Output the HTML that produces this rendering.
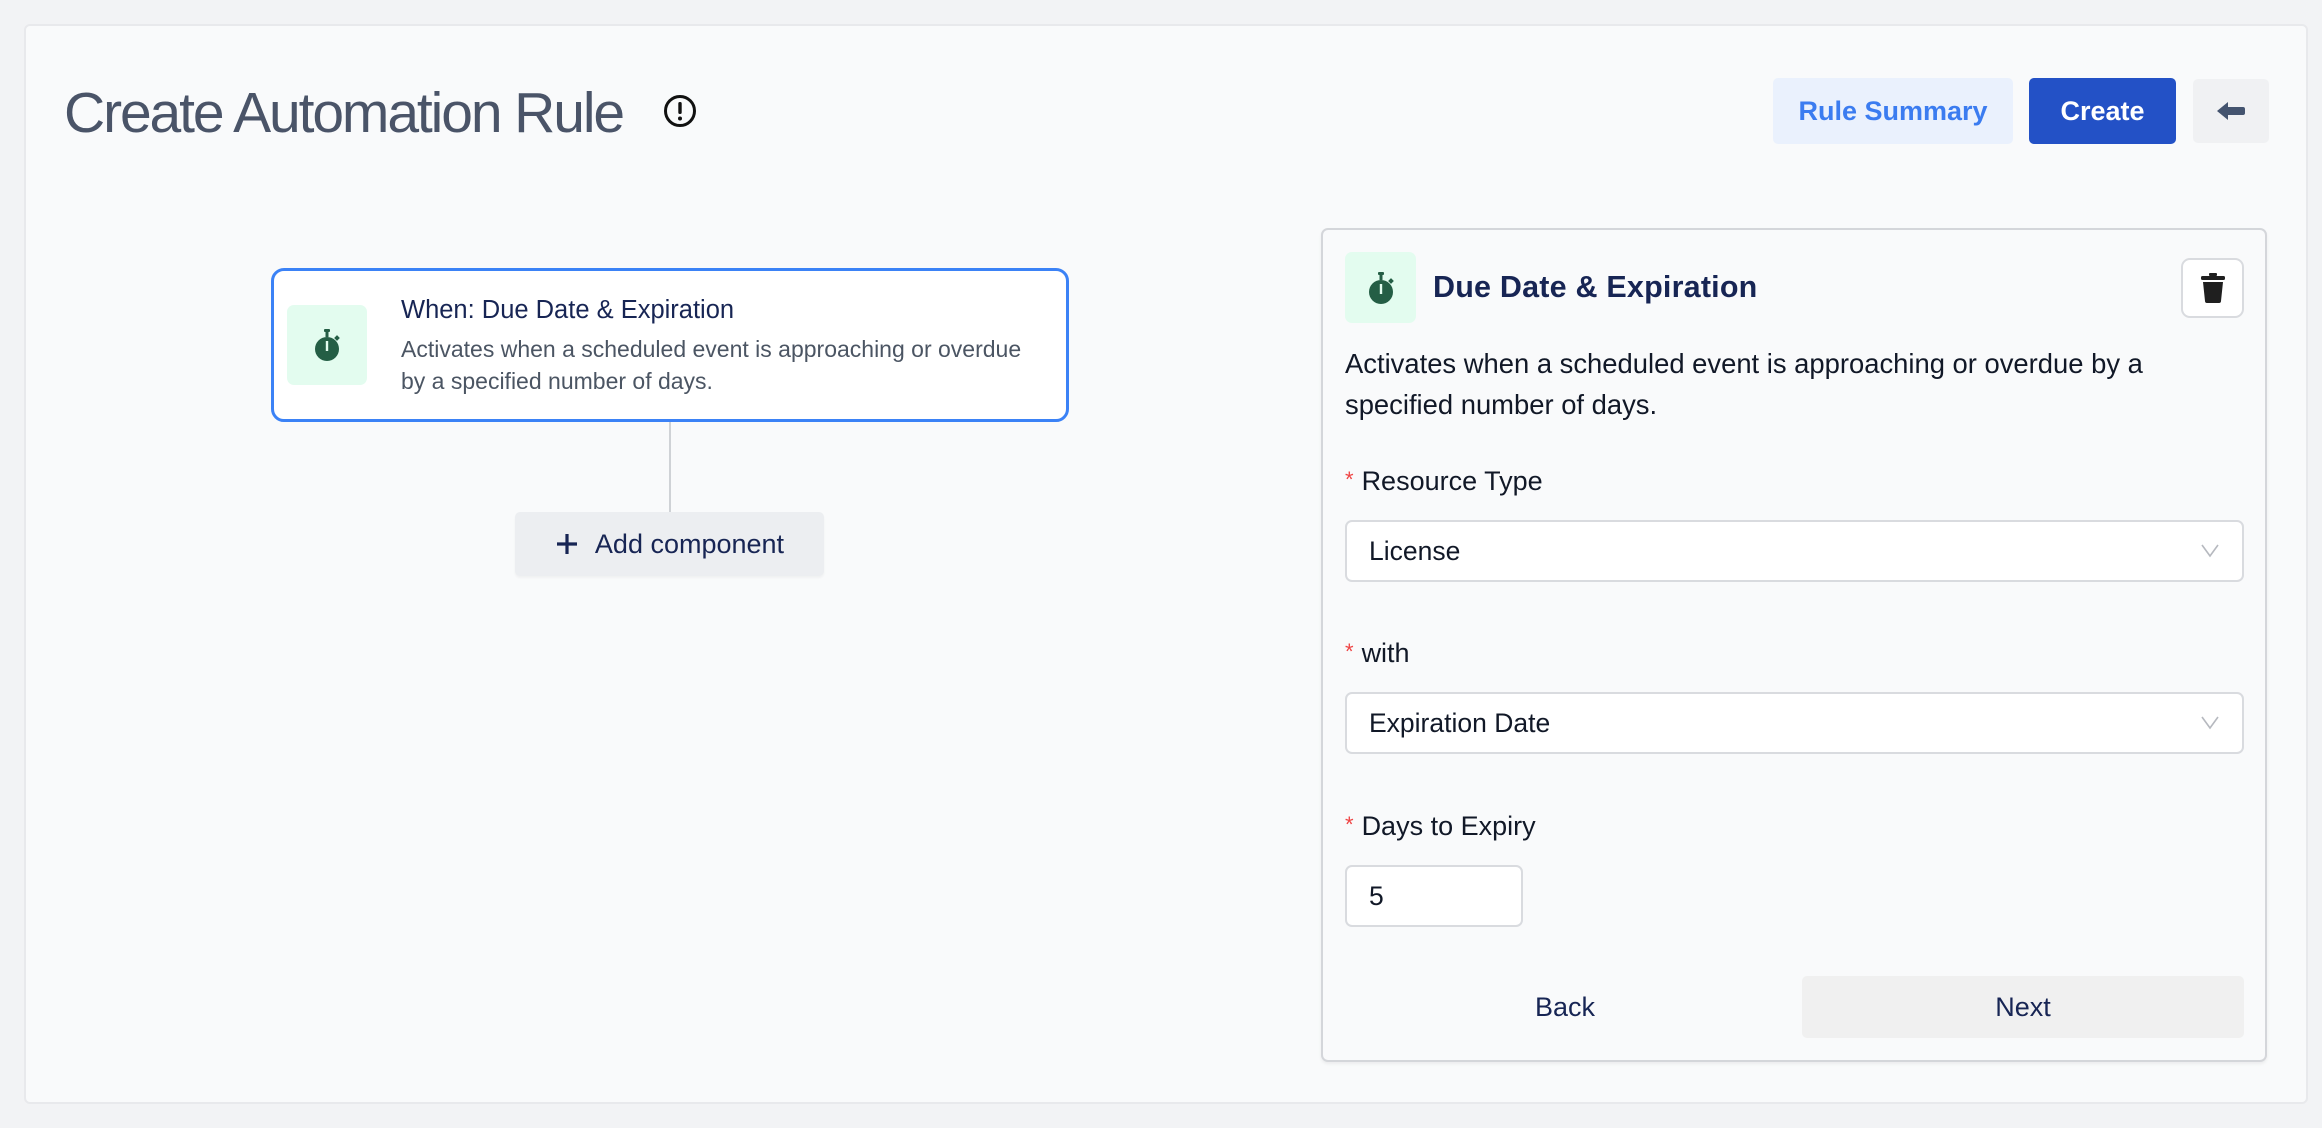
<!DOCTYPE html>
<html><head><meta charset="utf-8"><style>
*{box-sizing:border-box;margin:0;padding:0}
body{width:2322px;height:1128px;background:#f2f3f5;font-family:"Liberation Sans",Helvetica,Arial,sans-serif;position:relative;overflow:hidden}
.abs{position:absolute}
.card{left:24px;top:24px;width:2284px;height:1080px;background:#f9fafb;border:2px solid #e8e9ec;border-radius:6px}
.title{left:64px;top:80px;font-size:57px;font-weight:300;color:#4a5468;letter-spacing:-2.1px;line-height:66px}
.btn{display:flex;align-items:center;justify-content:center;border-radius:5px;font-size:27px}
.node{left:271px;top:268px;width:798px;height:154px;background:#fff;border:3px solid #3b82f6;border-radius:13px}
.icbox{background:#e3fcef;border-radius:7px;display:flex;align-items:center;justify-content:center}
.panel{left:1321px;top:228px;width:946px;height:834px;border:2px solid #d4d6da;border-radius:7px;background:#f9fafb;box-shadow:0 2px 3px rgba(0,0,0,.06)}
.lbl{font-size:27px;color:#111827;font-weight:500}
.lbl span{color:#ef4444;font-size:22px;margin-right:8px;position:relative;top:-3px}
.sel{background:#fff;border:2px solid #d9dbdf;border-radius:7px;font-size:26.5px;color:#111827;display:flex;align-items:center;padding-left:22px}
</style></head><body>
<div class="abs card"></div>
<div class="abs title">Create Automation Rule</div>
<svg class="abs" style="left:663px;top:94px" width="34" height="34" viewBox="0 0 34 34"><circle cx="17" cy="17" r="14.5" fill="none" stroke="#111" stroke-width="3"/><rect x="15.3" y="8" width="3.4" height="12" rx="1.5" fill="#111"/><circle cx="17" cy="24.5" r="2" fill="#111"/></svg>

<div class="abs btn" style="left:1773px;top:78px;width:240px;height:66px;background:#eaf1fd;color:#3b7cf0;font-weight:600">Rule Summary</div>
<div class="abs btn" style="left:2029px;top:78px;width:147px;height:66px;background:#2351c6;color:#fff;font-weight:600">Create</div>
<div class="abs btn" style="left:2193px;top:79px;width:76px;height:64px;background:#f0f1f3">
<svg width="30" height="22" viewBox="0 0 30 22"><path d="M1 11 L12 2 L12 7 L27 7 Q29 7 29 9 L29 13 Q29 15 27 15 L12 15 L12 20 Z" fill="#44546f"/></svg></div>

<div class="abs node"></div>
<div class="abs icbox" style="left:287px;top:305px;width:80px;height:80px">
<svg width="30" height="36" viewBox="0 0 30 36"><rect x="12" y="2" width="6" height="3" rx="1" fill="#245e45"/><rect x="13.5" y="4" width="3" height="6" fill="#245e45"/><circle cx="15" cy="22" r="12" fill="#245e45"/><rect x="23" y="9" width="4" height="4" transform="rotate(45 25 11)" fill="#245e45"/><rect x="13.8" y="14" width="2.4" height="10" fill="#e3fcef"/></svg></div>
<div class="abs" style="left:401px;top:296px;font-size:25.5px;color:#172554;font-weight:500">When: Due Date &amp; Expiration</div>
<div class="abs" style="left:401px;top:333px;font-size:23px;color:#4b5563;line-height:32px;width:700px;white-space:nowrap">Activates when a scheduled event is approaching or overdue<br>by a specified number of days.</div>
<div class="abs" style="left:669px;top:422px;width:2px;height:91px;background:#cfd2d6"></div>
<div class="abs btn" style="left:515px;top:512px;width:309px;height:64px;background:#eceef1;color:#172554;font-weight:500;box-shadow:0 2px 2px rgba(0,0,0,.04)"><svg width="24" height="24" viewBox="0 0 24 24" style="margin-right:16px"><path d="M12 2V22M2 12H22" stroke="#172554" stroke-width="3.2"/></svg>Add component</div>

<div class="abs panel"></div>
<div class="abs icbox" style="left:1345px;top:252px;width:71px;height:71px">
<svg width="30" height="36" viewBox="0 0 30 36"><rect x="12" y="2" width="6" height="3" rx="1" fill="#245e45"/><rect x="13.5" y="4" width="3" height="6" fill="#245e45"/><circle cx="15" cy="22" r="12" fill="#245e45"/><rect x="23" y="9" width="4" height="4" transform="rotate(45 25 11)" fill="#245e45"/><rect x="13.8" y="14" width="2.4" height="10" fill="#e3fcef"/></svg></div>
<div class="abs" style="left:1433px;top:270px;font-size:30.5px;font-weight:700;color:#172554;letter-spacing:0.2px">Due Date &amp; Expiration</div>
<div class="abs" style="left:2181px;top:258px;width:63px;height:60px;background:#fff;border:2px solid #d9dbdf;border-radius:9px;display:flex;align-items:center;justify-content:center">
<svg width="26" height="30" viewBox="0 0 26 30"><rect x="9" y="0" width="8" height="3" rx="1" fill="#1f1f1f"/><rect x="1" y="3" width="24" height="4" rx="1.5" fill="#1f1f1f"/><path d="M3 9 L23 9 L21 28 Q21 30 19 30 L7 30 Q5 30 5 28 Z" fill="#1f1f1f"/></svg></div>
<div class="abs" style="left:1345px;top:343px;font-size:27.4px;color:#111827;line-height:41px;width:920px;white-space:nowrap">Activates when a scheduled event is approaching or overdue by a<br>specified number of days.</div>

<div class="abs lbl" style="left:1345px;top:466px"><span>*</span>Resource Type</div>
<div class="abs sel" style="left:1345px;top:520px;width:899px;height:62px">License</div>
<svg class="abs" style="left:2200px;top:542px" width="20" height="18" viewBox="0 0 20 18"><path d="M2 3 L10 14 L18 3" fill="none" stroke="#b6b9bf" stroke-width="1.6"/></svg>

<div class="abs lbl" style="left:1345px;top:638px"><span>*</span>with</div>
<div class="abs sel" style="left:1345px;top:692px;width:899px;height:62px">Expiration Date</div>
<svg class="abs" style="left:2200px;top:714px" width="20" height="18" viewBox="0 0 20 18"><path d="M2 3 L10 14 L18 3" fill="none" stroke="#b6b9bf" stroke-width="1.6"/></svg>

<div class="abs lbl" style="left:1345px;top:811px"><span>*</span>Days to Expiry</div>
<div class="abs sel" style="left:1345px;top:865px;width:178px;height:62px">5</div>

<div class="abs btn" style="left:1345px;top:976px;width:440px;height:62px;color:#172554;font-weight:500;font-size:27px">Back</div>
<div class="abs btn" style="left:1802px;top:976px;width:442px;height:62px;background:#f0f0f0;color:#172554;font-weight:500;font-size:27px">Next</div>
</body></html>
